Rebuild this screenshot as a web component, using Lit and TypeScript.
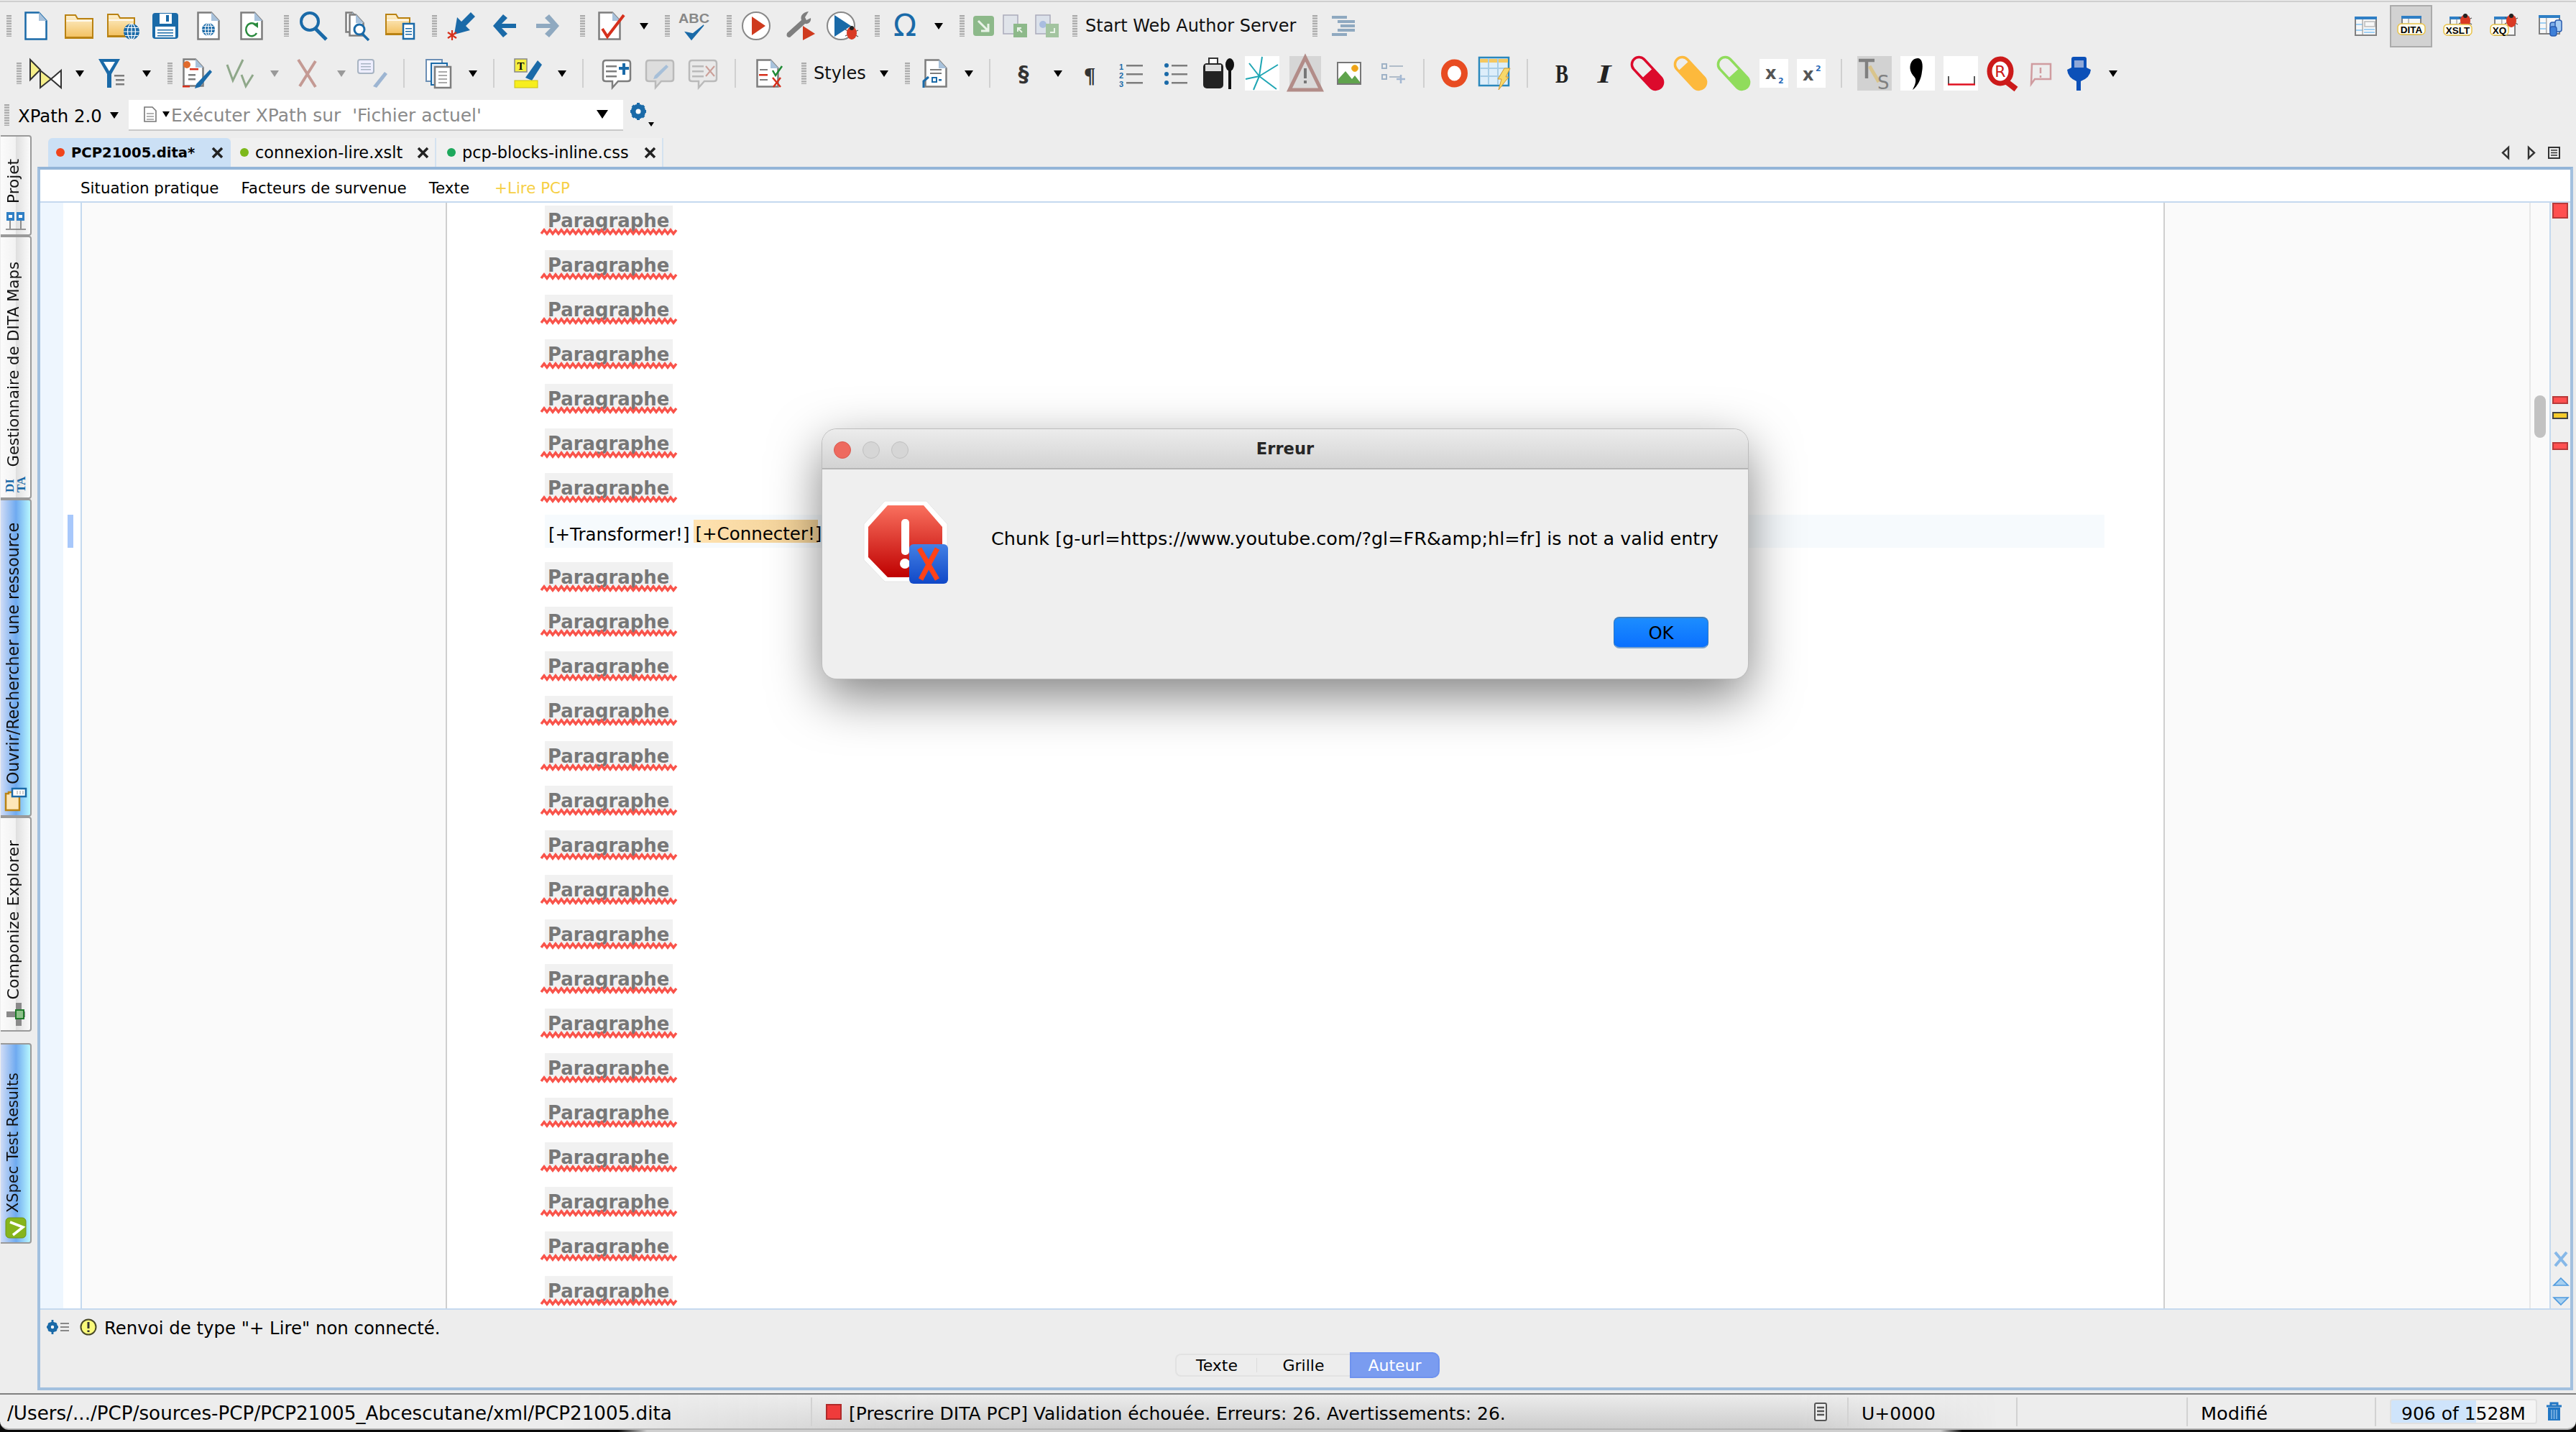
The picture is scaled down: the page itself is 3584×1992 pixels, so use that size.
import { LitElement, html, svg, css, TemplateResult } from "lit";
import { customElement } from "lit/decorators.js";

const B = "#1a6aa8";
const GY = "#7d7d7d";

// small drawing helpers, coordinates are screen pixels
const page = (w: number, h: number, c: string) => svg`
  <path d="M1.5 1.5H${w - 12}L${w - 1.5} 13V${h - 1.5}H1.5Z" fill="#fff" stroke=${c} stroke-width="2.5"/>
  <path d="M${w - 12} 1V13H${w - 1}Z" fill="#a8c2dc"/>`;
const folder = (w: number, h: number) => svg`
  <path d="M1 ${h - 1}V3H15L18 8H${w - 1}V${h - 1}Z" fill="url(#gold)" stroke="#b98213" stroke-width="2"/>
  <path d="M2 11H${w - 2}" stroke="#fff" stroke-width="1.5"/>
  <rect y=${h - 3} width=${w} height="3" fill="#b98213"/>`;
const globe = (x: number, y: number, r: number) => svg`
  <circle cx=${x} cy=${y} r=${r} fill=${B}/>
  <g stroke="#fff" stroke-width="1.2" fill="none">
    <path d="M${x - r} ${y}H${x + r}M${x} ${y - r}V${y + r}M${x - r + 2} ${y - r / 2}H${x + r - 2}M${x - r + 2} ${y + r / 2}H${x + r - 2}"/>
    <ellipse cx=${x} cy=${y} rx=${r / 2} ry=${r}/>
  </g>`;
const bubble = (c: string, w = 40) => svg`
  <path d="M5 2H${w - 5}Q${w - 1} 2 ${w - 1} 6V28Q${w - 1} 31 ${w - 5} 31H${w / 2 + 2}L${w / 2 - 6} 40V31H5Q1 31 1 28V6Q1 2 5 2Z" fill="#fff" stroke=${c} stroke-width="2.5"/>`;
const lines = (x: number, y: number, w: number, n: number, gap: number, c: string, sw = 2.5) => svg`
  ${Array.from({ length: n }, (_, i) => svg`<rect x=${x} y=${y + i * gap} width=${w} height=${sw} fill=${c}/>`)}`;
const pill = (c: string) => svg`
  <g transform="rotate(-43 24 20)">
    <rect x="14" y="-7" width="20" height="54" rx="10" fill="none" stroke=${c} stroke-width="3.5"/>
    <path d="M14 20H34V37A10 10 0 0 1 14 37Z" fill=${c}/>
  </g>`;
const bug = (x: number, y: number) => svg`
  <g stroke="#555" stroke-width="1.2"><path d="M${x - 9} ${y - 5}L${x + 9} ${y + 5}M${x - 9} ${y + 4}L${x + 9} ${y - 4}M${x} ${y - 10}V${y + 9}"/></g>
  <ellipse cx=${x} cy=${y} rx="7" ry="9" fill="#d93a24"/><circle cx=${x} cy=${y - 7} r="3" fill="#222"/>`;
const win = (w: number) => svg`
  <rect x="1" y="2" width=${w - 2} height="24" fill="#f7f7f7" stroke="#808080" stroke-width="2"/>
  <rect width=${w} height="4" fill="#2f7fc5"/>
  <rect x="2" y="10" width=${w / 3 - 1} height="2" fill="#9ed0f5"/><rect x="2" y="18" width=${w / 3 - 1} height="2" fill="#9ed0f5"/>
  <rect x=${w / 3} y="4" width="1.5" height="21" fill="#aaa"/>`;
const badge = (w: number, t: string) => svg`
  <rect x="1" y="11" width=${w - 2} height="15" rx="5" fill="#fffdf0" stroke="#e8c24a" stroke-width="1.5"/>
  <text x=${w / 2} y="24" text-anchor="middle" font-size="13.5" font-weight="700" fill="#000" font-family="Liberation Sans">${t}</text>`;

type Ic = { w: number; h: number; t: unknown };
const I = (w: number, h: number, t: unknown): Ic => ({ w, h, t });

const icons: Record<string, Ic> = {
  grip: I(7, 30, svg`<path d="M3.5 0V30" stroke="#aaa" stroke-width="7" stroke-dasharray="2.2 1.4"/>`),
  sep: I(2, 40, svg`<rect width="2" height="40" fill="#d0d0d0"/>`),
  caret: I(12, 9, svg`<path d="M0 0H12L6 9Z" fill="#000"/>`),
  caretg: I(12, 9, svg`<path d="M0 0H12L6 9Z" fill="#999"/>`),
  new: I(32, 40, page(32, 40, B)),
  folder: I(40, 36, folder(40, 36)),
  folderweb: I(45, 38, svg`${folder(39, 35)}${globe(34, 27, 11)}`),
  save: I(36, 36, svg`<rect width="36" height="36" rx="4" fill=${B}/><rect x="10" y="1" width="17" height="14" fill="#fff"/><rect x="19" y="3" width="4" height="9" fill=${B}/><rect x="4" y="19" width="28" height="15" fill="#fff"/>${lines(7, 23, 22, 3, 4, B, 1.5)}`),
  docweb: I(32, 40, svg`${page(32, 40, GY)}${globe(16, 25, 9)}`),
  docref: I(32, 40, svg`${page(32, 40, GY)}<path d="M22 19A8 9 0 1 0 23 30" fill="none" stroke="#2a8a3e" stroke-width="2.5"/><path d="M18 18L25 15V23Z" fill="#2a8a3e"/>`),
  search: I(41, 40, svg`<circle cx="15" cy="14" r="12" fill="none" stroke=${B} stroke-width="4"/><path d="M23 24L38 39" stroke=${B} stroke-width="5"/>`),
  docsearch: I(34, 40, svg`${page(22, 30, GY)}<g transform="translate(5 3)">${page(22, 32, GY)}</g><circle cx="20" cy="25" r="7" fill="#fff" stroke=${B} stroke-width="3"/><path d="M24 31L33 40" stroke=${B} stroke-width="3.5"/>`),
  folderdoc: I(41, 38, svg`${folder(35, 32)}<rect x="25" y="16" width="15" height="21" fill="#fff" stroke=${B} stroke-width="2.5"/>${lines(28, 22, 9, 3, 4, B, 1.5)}`),
  arrowstar: I(39, 40, svg`<path d="M10 32L14 8L20 14L33 1L39 7L26 20L32 26Z" fill=${B}/><path d="M7 26V40M1 29L13 37M13 29L1 37" stroke="#d6301c" stroke-width="2.2"/>`),
  back: I(32, 32, svg`<path d="M14 0L20 5L12 13H32V19H12L20 27L14 32L0 16Z" fill=${B}/>`),
  forward: I(32, 32, svg`<path d="M18 0L12 5L20 13H0V19H20L12 27L18 32L32 16Z" fill="#8fa9c0"/>`),
  checkdoc: I(38, 40, svg`${page(32, 40, GY)}<path d="M6 24L13 35L36 5" fill="none" stroke="#d6301c" stroke-width="4"/>`),
  abc: I(43, 40, svg`<text x="0" y="16" font-size="19" font-weight="700" fill="#888" font-family="Liberation Sans" textLength="43" lengthAdjust="spacingAndGlyphs">ABC</text><path d="M10 29L18 39L35 19L20 31Z" fill=${B} stroke=${B} stroke-width="1.5"/>`),
  play: I(40, 40, svg`<ellipse cx="20" cy="20" rx="19" ry="19" fill="#fff" stroke="#888" stroke-width="2"/><path d="M14 7L33 20L14 33Z" fill="#cf3a1e"/>`),
  wrench: I(41, 40, svg`<path d="M32 0C24 1 20 6 22 12L2 30Q0 36 6 36L27 17C32 18 36 14 35 9L29 12L27 8Z" fill="#7f7f7f"/><path d="M24 20L41 31L24 40Z" fill="#cf3a1e"/>`),
  debug: I(45, 40, svg`<ellipse cx="20" cy="20" rx="19" ry="19" fill="#fff" stroke="#888" stroke-width="2"/><path d="M11 5L34 20L11 35Z" fill=${B}/>${bug(35, 30)}`),
  omega: I(36, 36, svg`<text x="18" y="32" text-anchor="middle" font-size="42" fill=${B} font-family="DejaVu Sans">Ω</text>`),
  garrow: I(29, 28, svg`<rect width="29" height="28" rx="4" fill="#8db98a"/><path d="M7 7L21 21M21 11V21H11" stroke="#e9f3e8" stroke-width="3" fill="none"/>`),
  docg: I(34, 32, svg`<rect x="1" y="1" width="20" height="26" fill="#e0e4ea" stroke="#aab" stroke-width="1.5"/><rect x="15" y="13" width="19" height="19" fill="#8db98a"/><path d="M27 25L21 19M21 24V19H26" stroke="#e9f3e8" stroke-width="2" fill="none"/>`),
  docg2: I(33, 32, svg`<rect x="1" y="1" width="20" height="26" fill="#dbe1ea" stroke="#aab" stroke-width="1.5"/><circle cx="11" cy="14" r="5" fill="#a9bde0"/><rect x="15" y="13" width="18" height="19" fill="#a3c4a0"/><path d="M21 25H27V19" stroke="#e9f3e8" stroke-width="2" fill="none"/>`),
  indent: I(32, 28, svg`<g fill="#8fa9c0"><rect width="21" height="4"/><rect x="8" y="6" width="24" height="4"/><rect x="12" y="12" width="20" height="4"/><rect x="8" y="18" width="24" height="4"/><rect y="24" width="21" height="4"/></g>`),
  xpath: I(45, 40, svg`<path d="M1 1L15 15L1 29Z" fill="#f5ee8a" stroke="#333" stroke-width="2"/><path d="M15 40V16L30 28Z" fill="#f5ee8a" stroke="#333" stroke-width="2"/><path d="M44 40V16L30 28Z" fill="#fff" stroke="#333" stroke-width="2"/>`),
  filter: I(37, 40, svg`<path d="M0 0H30L18 21V40H12V21Z" fill=${B}/><path d="M7 4H23L15 17Z" fill="#fff"/>${lines(22, 22, 14, 1, 0, GY)}${lines(24, 28, 12, 2, 6, GY)}`),
  docedit: I(41, 42, svg`${page(30, 40, GY)}<circle cx="6" cy="9" r="5" fill="#e06a2c"/>${lines(10, 14, 12, 1, 0, "#d6301c")}${lines(8, 22, 10, 2, 6, GY)}<path d="M38 16L41 19L24 40L17 42L19 36Z" fill=${B}/>${lines(0, 38, 10, 1, 0, "#d6301c")}`),
  checks: I(40, 40, svg`<path d="M2 8L10 30L24 1M22 22L28 38L38 22" fill="none" stroke="#8fa88a" stroke-width="3"/>`),
  xm: I(32, 40, svg`<path d="M4 1L28 39M28 3L6 38" stroke="#c49a94" stroke-width="4"/>`),
  compen: I(42, 40, svg`<rect x="1" y="1" width="22" height="19" rx="3" fill="#eef" stroke="#a8b4c2" stroke-width="2"/>${lines(5, 6, 14, 3, 4, "#a8b4c2", 1.5)}<path d="M38 18L42 21L27 40L22 38Z" fill="#9db5d2"/>`),
  copy: I(36, 40, svg`<rect x="1" y="1" width="22" height="30" fill="#fff" stroke="#6c8fb5" stroke-width="2"/><rect x="8" y="6" width="22" height="30" fill="#e4eef8" stroke=${B} stroke-width="2"/><rect x="13" y="11" width="22" height="29" fill="#fff" stroke=${GY} stroke-width="2.5"/>${lines(18, 17, 12, 4, 5, "#aaa", 2)}`),
  hilite: I(38, 40, svg`<rect x="0" y="0" width="17" height="18" fill="#f5ee40" stroke="#888" stroke-width="1.5"/><text x="8.5" y="15" text-anchor="middle" font-size="15" font-weight="700" font-family="Liberation Serif">T</text><path d="M32 2L38 8L24 30L15 26Z" fill=${B}/><rect x="0" y="30" width="32" height="10" fill="#f7ee1e" stroke="#c9bf15"/>`),
  complus: I(40, 40, svg`${bubble("#7d7d7d")}${lines(5, 9, 15, 3, 7, GY)}<path d="M30 6V22M23 13H37" stroke=${B} stroke-width="4"/>`),
  compeng: I(40, 40, svg`<g opacity=".75"><path d="M5 2H35Q39 2 39 6V28Q39 31 35 31H22L14 40V31H5Q1 31 1 28V6Q1 2 5 2Z" fill="#d8d8d8" stroke="#aaa" stroke-width="2.5"/><path d="M29 8L32 11L16 27L11 28L13 23Z" fill="#8fb0d2"/></g>`),
  comx: I(40, 40, svg`<g opacity=".75"><path d="M5 2H35Q39 2 39 6V28Q39 31 35 31H22L14 40V31H5Q1 31 1 28V6Q1 2 5 2Z" fill="#e8e8e8" stroke="#aaa" stroke-width="2.5"/>${lines(5, 9, 16, 3, 7, "#aaa")}<path d="M24 10L36 24M36 10L24 24" stroke="#c0857c" stroke-width="2"/></g>`),
  docchk: I(37, 40, svg`${page(32, 40, GY)}${lines(5, 14, 11, 3, 7, GY, 2)}${lines(4, 21, 12, 1, 0, "#d6301c")}<path d="M23 16L27 23L36 10" fill="none" stroke="#1e8a34" stroke-width="2.5"/><path d="M23 26L34 39M34 26L24 39" stroke="#d6301c" stroke-width="2.5"/>`),
  docins: I(34, 40, svg`<g transform="translate(2 0)">${page(32, 40, GY)}</g>${lines(10, 14, 16, 2, 5, GY, 2)}<rect x="13" y="26" width="6" height="6" fill="none" stroke=${B} stroke-width="2"/><rect x="22" y="28" width="4" height="2.5" fill=${B}/><path d="M1 40V31L8 25" fill="none" stroke=${B} stroke-width="3"/>`),
  sect: I(16, 38, svg`<text x="8" y="30" text-anchor="middle" font-size="30" font-weight="700" fill="#333" font-family="DejaVu Sans">§</text>`),
  pilcrow: I(22, 36, svg`<text x="11" y="30" text-anchor="middle" font-size="30" font-weight="700" fill="#333" font-family="Liberation Serif">¶</text>`),
  ol: I(33, 30, svg`${["1", "2", "3"].map((n, i) => svg`<text x="0" y=${10 + i * 12} font-size="11" font-weight="700" fill=${B} font-family="Liberation Sans">${n}</text>`)}${lines(10, 3, 23, 3, 12, GY)}`),
  ul: I(32, 30, svg`<circle cx="3" cy="4" r="3" fill=${B}/><circle cx="3" cy="16" r="3" fill=${B}/><circle cx="3" cy="28" r="3" fill=${B}/>${lines(10, 3, 22, 3, 12, GY)}`),
  bottle: I(44, 44, svg`<rect x="9" y="1" width="12" height="8" fill="#fff" stroke="#333" stroke-width="2"/><rect x="1" y="8" width="28" height="35" rx="5" fill="#222"/><rect x="4" y="10" width="22" height="9" fill="#ddd"/><ellipse cx="38" cy="10" rx="6" ry="9" fill="#111"/><rect x="36" y="14" width="4" height="30" fill="#111"/>`),
  burst: I(48, 48, svg`<rect width="48" height="48" fill="#fff"/><g stroke="#1fa6b4" stroke-width="2" fill="none"><path d="M20 28L24 1M20 28L46 12M20 28L6 10M20 28L44 46M20 28L12 47M20 28L1 32"/></g>`),
  warn: I(46, 48, svg`<rect x="1" width="44" height="46" fill="#d6d6d6"/><path d="M23 2L45 47H1Z" fill="#dadada" stroke="#b28c88" stroke-width="5"/><rect x="21" y="17" width="4" height="14" fill="#777"/><rect x="21" y="34" width="4" height="4" fill="#777"/>`),
  image: I(34, 32, svg`<rect x="1" y="1" width="32" height="30" fill="#fff" stroke="#777" stroke-width="2"/><circle cx="25" cy="9" r="4.5" fill="#f0a018" stroke="#e8c030"/><path d="M2 30V24L12 13L21 24L25 19L32 28V30Z" fill="#5fa34c"/>`),
  listadd: I(33, 28, svg`<g fill="none" stroke="#9fb2c6" stroke-width="2"><rect x="1" y="1" width="6" height="6"/><rect x="1" y="16" width="6" height="6"/></g><path d="M11 4H30M11 19H26" stroke="#b0bcc8" stroke-width="2"/><path d="M27 16V28M21 22H33" stroke="#a4b8d2" stroke-width="2.5"/>`),
  buoy: I(37, 40, svg`<ellipse cx="18.5" cy="20" rx="14" ry="15" fill="#fff" stroke="#e84c22" stroke-width="9"/>`),
  tablebolt: I(45, 46, svg`<rect x="1" y="1" width="41" height="39" fill="#ddeefa" stroke="#2a88bd" stroke-width="2.5"/><rect x="2" y="3" width="39" height="5" fill="#f5c860"/><path d="M14 3V39M27 3V39M2 16H41M2 27H41" stroke="#a8cde6" stroke-width="2"/><path d="M36 16L44 16L38 28L42 28L28 46L32 31L27 31Z" fill="#f7d86a" stroke="#d69a2c"/>`),
  bold: I(18, 30, svg`<text x="9" y="28" text-anchor="middle" font-size="35" font-weight="700" fill="#222" font-family="Liberation Serif" textLength="18" lengthAdjust="spacingAndGlyphs">B</text>`),
  ital: I(19, 30, svg`<text x="9" y="28" text-anchor="middle" font-size="35" font-weight="700" font-style="italic" fill="#222" font-family="Liberation Serif" textLength="19" lengthAdjust="spacingAndGlyphs">I</text>`),
  pillr: I(48, 40, pill("#dc0a2c")),
  pillo: I(48, 40, svg`<g transform="rotate(-43 24 20)"><rect x="14" y="-7" width="20" height="54" rx="10" fill="none" stroke="#fdb93c" stroke-width="3.5"/><path d="M14 6H34V37A10 10 0 0 1 14 37Z" fill="#fdb93c"/></g>`),
  pillg: I(48, 40, pill("#90dc5c")),
  sub: I(40, 40, svg`<rect width="40" height="40" fill="#fff"/><text x="8" y="28" font-size="24" font-weight="700" fill="#555" font-family="DejaVu Sans">x</text><text x="26" y="34" font-size="11" font-weight="700" fill="#2a6ab8" font-family="DejaVu Sans">2</text>`),
  sup: I(40, 40, svg`<rect width="40" height="40" fill="#fff"/><text x="8" y="30" font-size="24" font-weight="700" fill="#555" font-family="DejaVu Sans">x</text><text x="26" y="17" font-size="11" font-weight="700" fill="#2a6ab8" font-family="DejaVu Sans">2</text>`),
  ts: I(48, 48, svg`<rect width="48" height="48" fill="#d2d2d2"/><path d="M2 6H24M13 6V31" stroke="#808080" stroke-width="4.5"/><path d="M17 14L30 36" stroke="#d9c48c" stroke-width="5"/><text x="28" y="46" font-size="26" fill="#808080" font-family="DejaVu Sans">S</text>`),
  comma: I(48, 48, svg`<rect width="48" height="48" fill="#fff"/><path d="M24 3C16 3 12 12 14 20C16 27 20 28 21 32C22 38 19 42 17 47C24 42 29 32 30 22C32 11 30 3 24 3Z" fill="#000"/>`),
  space: I(48, 48, svg`<rect width="48" height="48" fill="#fff"/><path d="M7 28V40M43 28V40" stroke="#222" stroke-width="1.5"/><path d="M6 39.5H44" stroke="#e01020" stroke-width="2.5"/>`),
  rmag: I(45, 46, svg`<ellipse cx="18" cy="20" rx="15" ry="17" fill="#fff" stroke="#cc1a1a" stroke-width="7"/><text x="18" y="28" text-anchor="middle" font-size="22" fill="#cc1a1a" font-family="DejaVu Sans">R</text><path d="M27 35L40 45" stroke="#cc1a1a" stroke-width="8"/>`),
  comex: I(31, 30, svg`<path d="M3 2H29V23H7L2 30Z" fill="#ededed" stroke="#d09ca0" stroke-width="2.5"/><path d="M15 7V15M15 18V21" stroke="#d09ca0" stroke-width="2.5"/>`),
  plug: I(33, 48, svg`<rect x="6" y="1" width="21" height="22" rx="3" fill="#0c50b8"/><rect x="10" y="6" width="13" height="15" fill="#8fa8d8"/><path d="M0 19Q1 30 13 35V48H19V35Q32 30 33 19L27 16H6Z" fill="#0c50b8"/>`),
  winplain: I(31, 27, svg`${win(31)}<rect x="14" y="7" width="14" height="7" fill="none" stroke="#bbb" stroke-width="1.5"/><rect x="13" y="17" width="15" height="2" fill="#9ed0f5"/><rect x="13" y="21" width="15" height="2" fill="#9ed0f5"/>`),
  windita: I(40, 28, svg`<g transform="translate(6 0)">${win(28)}</g>${badge(40, "DITA")}`),
  winxslt: I(41, 30, svg`<g transform="translate(9 2)">${win(28)}</g>${bug(31, 8)}<g transform="translate(0 2)">${badge(41, "XSLT")}</g>`),
  winxq: I(39, 30, svg`<g transform="translate(6 2)">${win(30)}</g>${bug(30, 8)}<g transform="translate(0 2)">${badge(27, "XQ")}</g>`),
  windb: I(33, 30, svg`${win(30)}<rect x="16" y="10" width="9" height="14" rx="3" fill="#7fb0ea" stroke="#2a5cb0" stroke-width="1.5"/><rect x="23" y="7" width="9" height="16" rx="3" fill="#a8cdf2" stroke="#2a5cb0" stroke-width="1.5"/><rect x="16" y="16" width="9" height="13" rx="3" fill="#3f80d8" stroke="#2a5cb0" stroke-width="1.5"/>`),
};

type Tool = [number, string] | [number, "text", string, number];

const row1: Tool[] = [
  [9, "grip"], [34, "new"], [90, "folder"], [149, "folderweb"], [212, "save"], [274, "docweb"], [334, "docref"],
  [395, "grip"], [416, "search"], [480, "docsearch"], [536, "folderdoc"], [601, "grip"], [622, "arrowstar"],
  [686, "back"], [746, "forward"], [807, "grip"], [832, "checkdoc"], [890, "caret"], [925, "grip"], [944, "abc"],
  [1011, "grip"], [1032, "play"], [1093, "wrench"], [1150, "debug"], [1217, "grip"], [1241, "omega"], [1300, "caret"],
  [1335, "grip"], [1354, "garrow"], [1395, "docg"], [1440, "docg2"], [1492, "grip"],
  [1510, "text", "Start Web Author Server", 300], [1826, "grip"], [1853, "indent"],
];
const row2: Tool[] = [
  [23, "grip"], [41, "xpath"], [105, "caret"], [137, "filter"], [198, "caret"], [233, "grip"], [254, "docedit"],
  [314, "checks"], [376, "caretg"], [411, "xm"], [469, "caretg"], [497, "compen"], [561, "sep"], [592, "copy"],
  [652, "caret"], [686, "sep"], [716, "hilite"], [776, "caret"], [810, "sep"], [838, "complus"], [898, "compeng"],
  [958, "comx"], [1022, "sep"], [1052, "docchk"], [1115, "grip"], [1132, "text", "Styles", 76], [1224, "caret"],
  [1259, "grip"], [1284, "docins"], [1342, "caret"], [1376, "sep"], [1416, "sect"], [1466, "caret"], [1505, "pilcrow"],
  [1557, "ol"], [1620, "ul"], [1673, "bottle"], [1732, "burst"], [1793, "warn"], [1860, "image"], [1922, "listadd"],
  [1980, "sep"], [2005, "buoy"], [2057, "tablebolt"], [2124, "sep"], [2164, "bold"], [2223, "ital"], [2268, "pillr"],
  [2328, "pillo"], [2388, "pillg"], [2448, "sub"], [2500, "sup"], [2561, "sep"], [2584, "ts"], [2644, "comma"],
  [2704, "space"], [2765, "rmag"], [2824, "comex"], [2876, "plug"], [2934, "caret"],
];

const markers = [
  { top: 0, h: 22, c: "mk" },
  { top: 269, h: 11, c: "mk" },
  { top: 291, h: 10, c: "mk warn" },
  { top: 333, h: 11, c: "mk" },
];

const squiggle = Array.from({ length: 48 }, (_, i) => `${i * 4},${i % 2 ? 2 : 7}`).join(" ");
const closeX = html`<svg class="x" width="17" height="15" viewBox="0 0 17 15"><path d="M2 1L15 14M15 1L2 14" stroke="#222" stroke-width="3.5"/></svg>`;

@customElement("app-root")
export class AppRoot extends LitElement {
  static styles = css`
    :host {
      display: block;
      box-sizing: border-box;
      width: 3584px;
      height: 1992px;
      padding-top: 1px;
      position: relative;
      overflow: hidden;
      background: #ededed;
      color: #000;
      font-family: "DejaVu Sans", sans-serif;
      font-size: 24.4px;
    }
    .defs {
      position: absolute;
      width: 0;
      height: 0;
    }
    svg {
      display: block;
      flex: none;
      overflow: visible;
    }
    .page-top {
      height: 2px;
      background: #cfcfcf;
    }
    .row {
      display: flex;
      align-items: center;
      height: 66px;
    }
    .ti {
      flex: none;
    }
    .tl {
      flex: none;
      font-size: 24px;
      white-space: nowrap;
      color: #111;
    }
    .selected {
      box-sizing: border-box;
      display: flex;
      align-items: center;
      justify-content: center;
      width: 59px;
      height: 59px;
      margin: 0 15px 0 18px;
      background: #d2d2d2;
      border: 2px solid #ababab;
    }
    .persp {
      margin-left: auto;
      margin-right: 19px;
      display: flex;
      align-items: center;
    }
    .xrow {
      display: flex;
      align-items: center;
      height: 50px;
      padding-left: 6px;
    }
    .xpath-label {
      margin-left: 12px;
      width: 118px;
      padding-top: 2px;
      white-space: nowrap;
    }
    .combo {
      box-sizing: border-box;
      width: 688px;
      height: 43px;
      margin-left: 14px;
      padding-left: 21px;
      display: flex;
      align-items: center;
      background: #fff;
      border-bottom: 2px solid #c9c9c9;
      color: #8a8a8a;
      white-space: pre;
      font-size: 24.9px;
    }
    .combo-text {
      flex: 1;
      padding-top: 2px;
    }
    .body {
      display: flex;
      height: 1753px;
    }
    .rail {
      flex: none;
      width: 52px;
      padding-top: 3px;
      box-sizing: border-box;
    }
    .vtab {
      box-sizing: border-box;
      width: 43px;
      margin-left: 1px;
      display: flex;
      flex-direction: column;
      align-items: center;
      justify-content: flex-end;
      gap: 9px;
      padding-bottom: 6px;
      font-size: 21.6px;
      color: #111;
      border: 2px solid #9a9a9a;
      border-left: none;
      border-top-right-radius: 4px;
      border-bottom-right-radius: 4px;
      background: linear-gradient(90deg, #fbfbfb 0, #f2f2f2 50%, #dfdfdf 52%, #fbfbfb 100%);
      overflow: hidden;
    }
    .vtab.on {
      background: linear-gradient(90deg, #d0dcf6 0, #6faaf0 52%, #b7f6ff 100%);
    }
    .vtab span {
      writing-mode: vertical-rl;
      transform: rotate(180deg);
      white-space: nowrap;
      margin-right: 7px;
    }
    .t-proj {
      height: 140px;
      gap: 11px;
    }
    .t-dita {
      height: 366px;
      font-size: 21.2px;
      gap: 7px;
    }
    .t-open {
      height: 442px;
      font-size: 22.1px;
      gap: 5px;
    }
    .t-comp {
      height: 299px;
      font-size: 22px;
      gap: 5px;
    }
    .t-spec {
      height: 279px;
      margin-top: 16px;
      font-size: 20.9px;
      gap: 7px;
    }
    .main {
      flex: none;
      width: 3528px;
      display: flex;
      flex-direction: column;
    }
    .strip {
      flex: none;
      height: 47px;
      box-sizing: border-box;
      padding: 7px 0 0 15px;
      display: flex;
      align-items: stretch;
    }
    .tab {
      box-sizing: border-box;
      display: flex;
      align-items: center;
      font-size: 22.4px;
      white-space: nowrap;
      border-right: 2px solid #d4e2f0;
      background: #f0f0f0;
    }
    .tab.on {
      font-weight: 700;
      font-size: 19.6px;
      background: #cbe0f5;
      border: none;
      border-radius: 6px 6px 0 0;
    }
    .dot {
      width: 12px;
      height: 12px;
      border-radius: 50%;
      margin-right: 9px;
      flex: none;
    }
    .tab b {
      flex: 1;
      font-weight: inherit;
    }
    .nav {
      margin-left: auto;
      display: flex;
      align-items: center;
      padding-right: 18px;
      gap: 26px;
    }
    .frame {
      flex: none;
      height: 1702px;
      box-sizing: border-box;
      display: flex;
      flex-direction: column;
      border: 4px solid #a2c0df;
      border-top-color: #94b5d8;
      background: #fff;
    }
    .crumbs {
      flex: none;
      height: 46px;
      box-sizing: border-box;
      border-bottom: 2px solid #c5d9ef;
      display: flex;
      align-items: center;
      font-size: 21.4px;
      padding: 6px 0 0 56px;
      gap: 31px;
      white-space: nowrap;
    }
    .crumbs .lire {
      color: #f6cf45;
      margin-left: 4px;
    }
    .editor {
      flex: none;
      height: 1538px;
      display: flex;
      overflow: hidden;
      border-bottom: 2px solid #c5d9ef;
    }
    .gutter {
      flex: none;
      width: 32px;
      background: #eef6fe;
    }
    .lines {
      flex: none;
      width: 24px;
      box-sizing: content-box;
      background: #fff;
      border-right: 2px solid #c5d9ef;
      position: relative;
    }
    .cursor {
      position: absolute;
      left: 6px;
      top: 434px;
      width: 8px;
      height: 46px;
      background: #a8c8fb;
    }
    .margin-l {
      flex: none;
      width: 506px;
      background: #fafafa;
      border-right: 2px solid #cfcfcf;
    }
    .content {
      flex: none;
      width: 2388px;
      box-sizing: border-box;
      padding: 4px 0 0 136px;
      display: flex;
      flex-direction: column;
      background: #fff;
    }
    .para {
      flex: none;
      position: relative;
      width: 178px;
      height: 34px;
      margin-bottom: 28.06px;
      padding-left: 4px;
      box-sizing: border-box;
      background: #f1f1f1;
      color: #777;
      font-weight: 700;
      font-size: 25.9px;
      line-height: 42px;
      white-space: nowrap;
    }
    .para svg {
      position: absolute;
      left: -5px;
      top: 32px;
    }
    .active {
      flex: none;
      width: 2170px;
      height: 46px;
      margin: -4px 0 20px;
      padding: 8px 0 0 5px;
      box-sizing: border-box;
      display: flex;
      align-items: center;
      background: #f6fafd;
      font-size: 24.5px;
      white-space: nowrap;
    }
    .connect {
      margin: 0 0 8px 6px;
      width: 173px;
      height: 32px;
      line-height: 40px;
      box-sizing: border-box;
      padding: 0 2px;
      background: linear-gradient(90deg, #ffe2b0, #f0cf95);
    }
    .margin-r {
      flex: none;
      width: 507px;
      background: #fafafa;
      border-left: 2px solid #cfcfcf;
      border-right: 2px solid #e8e8e8;
    }
    .track {
      flex: none;
      width: 26px;
      background: #fafafa;
      position: relative;
    }
    .thumb {
      position: absolute;
      left: 5px;
      top: 268px;
      width: 16px;
      height: 59px;
      border-radius: 8px;
      background: #c2c2c2;
    }
    .ruler {
      flex: none;
      flex-grow: 1;
      position: relative;
      background: #efefef;
      border-left: 2px solid #c5d9ef;
      display: flex;
      flex-direction: column;
      justify-content: flex-end;
      align-items: center;
      padding-bottom: 4px;
      box-sizing: border-box;
    }
    .mk {
      position: absolute;
      left: 2px;
      width: 22px;
      box-sizing: border-box;
      background: #ff5050;
      border: 2px solid #b83a3a;
    }
    .mk.warn {
      background: #f6cb2c;
      border-color: #444;
    }
    .ruler-btns {
      display: flex;
      flex-direction: column;
      align-items: center;
      gap: 15px;
    }
    .panel {
      flex: 1;
      background: #ededed;
      padding: 12px 0 0 9px;
      position: relative;
    }
    .msg {
      display: flex;
      align-items: center;
      height: 24px;
      white-space: nowrap;
      line-height: 24px;
    }
    .msg-text {
      margin-left: 10px;
      padding-top: 4px;
    }
    .modes {
      display: flex;
      margin: 23px 0 0 1570px;
      font-size: 22px;
      height: 36px;
      align-items: center;
    }
    .seg {
      box-sizing: border-box;
      height: 32px;
      display: flex;
      align-items: center;
      justify-content: center;
      border: 2px solid #e2e2e2;
      border-left: none;
      border-right: none;
    }
    .seg.first {
      width: 114px;
      border-left: 2px solid #e2e2e2;
      border-radius: 8px 0 0 8px;
      position: relative;
    }
    .seg.first::after {
      content: "";
      position: absolute;
      right: 0;
      top: 4px;
      bottom: 4px;
      width: 1px;
      background: #dcdcdc;
    }
    .seg.mid {
      width: 129px;
    }
    .seg.sel {
      width: 125px;
      height: 36px;
      color: #fff;
      background: #7a9cf0;
      border: 2px solid #6e92ee;
      border-radius: 0 10px 10px 0;
    }
    .statusbar {
      position: absolute;
      left: 0;
      right: 0;
      top: 1938px;
      height: 51px;
      box-sizing: border-box;
      display: flex;
      align-items: center;
      white-space: nowrap;
      font-size: 25px;
      background: #ededed;
      border-top: 2px solid #808080;
      border-bottom: 2px solid #b5b5b5;
      border-radius: 0 0 12px 12px;
    }
    .statusbar::before {
      content: "";
      position: absolute;
      inset: 0;
      background: linear-gradient(#ececec, #cdcdcd);
      -webkit-mask-image: linear-gradient(90deg, transparent 780px, #000 1300px, #000 2500px, transparent 2780px);
      mask-image: linear-gradient(90deg, transparent 780px, #000 1300px, #000 2500px, transparent 2780px);
    }
    .under {
      position: absolute;
      left: 0;
      right: 0;
      top: 1978px;
      height: 14px;
      background: linear-gradient(90deg, #0a0a0a 860px, #cfcfcf 900px, #cfcfcf 2700px, #0a0a0a 2730px);
    }
    .cell {
      position: relative;
      box-sizing: border-box;
      flex: none;
      height: 40px;
      display: flex;
      align-items: center;
      border-left: 2px solid #d2d2d2;
    }
    .st {
      padding-top: 5px;
    }
    .cell.c0 {
      width: 1128px;
      padding-left: 10px;
      border-left: none;
      font-size: 26.2px;
    }
    .c1 {
      width: 1442px;
      padding-left: 19px;
    }
    .sq {
      width: 22px;
      height: 22px;
      box-sizing: border-box;
      background: #ef3b3b;
      border: 2px solid #b02a2a;
      margin-right: 10px;
    }
    .spacer {
      margin-left: auto;
      margin-right: 28px;
    }
    .c2 {
      width: 235px;
      padding-left: 18px;
    }
    .c3 {
      width: 237px;
    }
    .c4 {
      width: 262px;
      padding-left: 18px;
      font-size: 25.6px;
    }
    .c5 {
      border-left: 2px solid #d2d2d2;
      padding-left: 19px;
      gap: 12px;
    }
    .mem {
      box-sizing: border-box;
      position: relative;
      width: 205px;
      height: 35px;
      border: 2px solid #e0e0e0;
      border-radius: 4px;
      padding-left: 14px;
      display: flex;
      align-items: center;
      background: linear-gradient(90deg, #cfe4fb 118px, #f4f4f4 118px);
    }
    .dialog {
      position: absolute;
      left: 1144px;
      top: 597px;
      width: 1288px;
      height: 347px;
      box-sizing: border-box;
      background: #efefef;
      border-radius: 20px;
      box-shadow: 0 0 0 1px #bdbdbd, 0 24px 70px rgba(0, 0, 0, 0.5);
      display: flex;
      flex-direction: column;
    }
    .d-title {
      flex: none;
      height: 56px;
      box-sizing: border-box;
      position: relative;
      display: flex;
      align-items: center;
      justify-content: center;
      background: linear-gradient(#ececec, #d3d3d3);
      border-bottom: 2px solid #b5b5b5;
      border-radius: 20px 20px 0 0;
      font-weight: 700;
      font-size: 22.6px;
      color: #262626;
    }
    .lights {
      position: absolute;
      left: 16px;
      top: 17px;
      display: flex;
      gap: 16px;
    }
    .lights i {
      width: 24px;
      height: 24px;
      box-sizing: border-box;
      border-radius: 50%;
      background: #d6d6d6;
      border: 1px solid #c0c0c0;
    }
    .lights i.close {
      background: #ee6a5f;
      border-color: #d9584e;
    }
    .d-body {
      flex: 1;
      padding: 44px 55px 0 57px;
      display: flex;
      flex-direction: column;
    }
    .d-row {
      display: flex;
      align-items: flex-start;
      height: 115px;
    }
    .d-msg {
      margin: 34px 0 0 60px;
      line-height: 36px;
      font-size: 25.5px;
      white-space: nowrap;
    }
    .ok {
      margin: 46px 0 0 auto;
      box-sizing: border-box;
      width: 132px;
      height: 44px;
      display: flex;
      align-items: center;
      justify-content: center;
      border-radius: 8px;
      background: linear-gradient(#1c8dff, #0a70ff);
      border: 1px solid #2d76c2;
      border-top: 2px solid #3f7fbe;
      border-bottom: 2px solid #7aa3cf;
    }
  `;

  private renderTools(list: Tool[]) {
    let cur = 0;
    return list.map((t) => {
      const gap = t[0] - cur;
      if (t[1] === "text") {
        const w = t[3] as number;
        cur = t[0] + w;
        return html`<span class="tl" style="margin-left:${gap}px;width:${w}px">${t[2]}</span>`;
      }
      const ic = icons[t[1]];
      cur = t[0] + ic.w;
      return html`<span class="ti" style="margin-left:${gap}px">${this.icon(t[1])}</span>`;
    });
  }

  private icon(name: string): TemplateResult {
    const ic = icons[name];
    return html`<svg width=${ic.w} height=${ic.h} viewBox="0 0 ${ic.w} ${ic.h}">${ic.t}</svg>`;
  }

  private renderRows() {
    const rows = [];
    for (let i = 0; i < 25; i++) {
      if (i === 7) {
        rows.push(html`<div class="active">[+Transformer!]<span class="connect">[+Connecter!]</span></div>`);
      } else {
        rows.push(html`<div class="para">Paragraphe
          <svg width="192" height="10" viewBox="0 0 192 10"><polyline points=${squiggle} fill="none" stroke="#f9534a" stroke-width="3.6"/></svg>
        </div>`);
      }
    }
    return rows;
  }

  render() {
    return html`
      <svg class="defs">
        <defs>
          <linearGradient id="gold" x1="0" y1="0" x2="0" y2="1">
            <stop offset="0" stop-color="#fdf0cf" />
            <stop offset="1" stop-color="#f3bf5c" />
          </linearGradient>
          <linearGradient id="stop" x1="0" y1="0" x2="0" y2="1">
            <stop offset="0" stop-color="#f9705e" />
            <stop offset="1" stop-color="#bf0000" />
          </linearGradient>
          <linearGradient id="xblue" x1="0" y1="0" x2="0" y2="1">
            <stop offset="0" stop-color="#4380e4" />
            <stop offset="1" stop-color="#1048c8" />
          </linearGradient>
        </defs>
      </svg>
      <div class="page-top"></div>
      <div class="row">
        ${this.renderTools(row1)}
        <div class="persp">
          ${this.icon("winplain")}
          <div class="selected">${this.icon("windita")}</div>
          ${this.icon("winxslt")}
          <span style="width:24px"></span>
          ${this.icon("winxq")}
          <span style="width:29px"></span>
          ${this.icon("windb")}
        </div>
      </div>
      <div class="row">${this.renderTools(row2)}</div>
      <div class="xrow">
        <span class="ti">${this.icon("grip")}</span>
        <span class="xpath-label">XPath 2.0</span>
        <svg style="margin-left:10px" width="12" height="9" viewBox="0 0 12 9"><path d="M0 0H12L6 9Z" fill="#000"/></svg>
        <div class="combo">
          <svg width="18" height="22" viewBox="0 0 18 22"><path d="M1 1H12L17 6V21H1Z" fill="#fff" stroke="#777" stroke-width="1.6"/><path d="M4 10H14M4 14H14M4 18H14" stroke="#999" stroke-width="1.4"/></svg>
          <svg style="margin:0 2px 0 8px" width="10" height="8" viewBox="0 0 10 8"><path d="M0 0H10L5 8Z" fill="#000"/></svg>
          <span class="combo-text">Exécuter XPath sur  'Fichier actuel'</span>
          <svg style="margin-right:21px" width="16" height="12" viewBox="0 0 16 12"><path d="M0 0H16L8 12Z" fill="#000"/></svg>
        </div>
        <svg style="margin-left:11px" width="32" height="36" viewBox="0 0 32 36">
          <circle cx="10" cy="13" r="7.5" fill="none" stroke=${B} stroke-width="5.5" />
          <path d="M10 1V25M-1 13H21M2 5L18 21M18 5L2 21" stroke=${B} stroke-width="4" />
          <circle cx="10" cy="13" r="3.5" fill="#fff" />
          <path d="M24 28H32L28 34Z" fill="#000" />
        </svg>
      </div>
      <div class="body">
        <div class="rail">
          <div class="vtab t-proj">
            <span>Projet</span>
            <svg width="28" height="26" viewBox="0 0 28 26"><g fill="#2f7fc5"><rect x="1" y="1" width="11" height="12"/><rect x="15" y="1" width="11" height="12"/></g><g fill="#fff"><rect x="4" y="5" width="5" height="4"/><rect x="18" y="5" width="5" height="4"/></g><path d="M6 13V24M21 13V24M0 25H28" stroke="#777" stroke-width="1.6"/></svg>
          </div>
          <div class="vtab t-dita">
            <span>Gestionnaire de DITA Maps</span>
            <svg width="32" height="30" viewBox="0 0 32 30"><g transform="rotate(-90 15 15)" font-family="Liberation Serif" font-weight="700" font-size="17" fill="${B}"><text x="1" y="13">DI</text><text x="1" y="29">TA</text></g></svg>
          </div>
          <div class="vtab on t-open">
            <span>Ouvrir/Rechercher une ressource</span>
            <svg width="30" height="32" viewBox="0 0 30 32"><path d="M1 31V8H5V6H20V31Z" fill="#fde6b8" stroke="#b98213" stroke-width="2.5"/><rect x="10" y="1" width="19" height="11" fill="#fff" stroke=${B} stroke-width="2.5"/><path d="M17 4V9M21 4V9M25 4V9" stroke="#999"/></svg>
          </div>
          <div class="vtab t-comp">
            <span>Componize Explorer</span>
            <svg width="26" height="32" viewBox="0 0 26 32"><path d="M0 16H26M17 0V32" stroke="#8a8a8a" stroke-width="8"/><rect x="13" y="10" width="11" height="12" fill="#8ec28a" stroke="#1f7a2a" stroke-width="2"/></svg>
          </div>
          <div class="vtab on t-spec">
            <span>XSpec Test Results</span>
            <svg width="28" height="28" viewBox="0 0 28 28"><rect width="28" height="28" rx="5" fill="#86b51c" stroke="#6f9416"/><path d="M6 6L24 13L10 24" fill="none" stroke="#fff" stroke-width="3.5"/></svg>
          </div>
        </div>
        <div class="main">
          <div class="strip">
            <div class="tab on" style="width:254px;padding:0 10px 0 11px">
              <i class="dot" style="background:#f0441c"></i><b>PCP21005.dita*</b>${closeX}
            </div>
            <div class="tab" style="width:286px;padding:0 8px 0 13px">
              <i class="dot" style="background:#7db81a"></i><b>connexion-lire.xslt</b>${closeX}
            </div>
            <div class="tab" style="width:316px;padding:0 8px 0 15px">
              <i class="dot" style="background:#1da85c"></i><b>pcp-blocks-inline.css</b>${closeX}
            </div>
            <div class="nav">
              <svg width="11" height="19" viewBox="0 0 11 19"><path d="M10 2V17L2 9.5Z" fill="none" stroke="#333" stroke-width="2.4"/></svg>
              <svg width="11" height="19" viewBox="0 0 11 19"><path d="M1 2V17L9 9.5Z" fill="none" stroke="#333" stroke-width="2.4"/></svg>
              <svg style="margin-left:-9px" width="17" height="17" viewBox="0 0 17 17"><rect x="1" y="1" width="15" height="15" fill="none" stroke="#333" stroke-width="2"/><path d="M4 5H13M4 8.500H13M4 12H13" stroke="#333" stroke-width="1.6"/></svg>
            </div>
          </div>
          <div class="frame">
            <div class="crumbs">
              <span>Situation pratique</span><span>Facteurs de survenue</span><span>Texte</span><span class="lire">+Lire PCP</span>
            </div>
            <div class="editor">
              <div class="gutter"></div>
              <div class="lines"><div class="cursor"></div></div>
              <div class="margin-l"></div>
              <div class="content">${this.renderRows()}</div>
              <div class="margin-r"></div>
              <div class="track"><div class="thumb"></div></div>
              <div class="ruler">
                ${markers.map((m) => html`<div class=${m.c} style="top:${m.top}px;height:${m.h}px"></div>`)}
                <div class="ruler-btns">
                  <svg width="22" height="21" viewBox="0 0 22 21"><path d="M3 1L19 20M19 1L3 20" stroke="#86b8e8" stroke-width="4"/></svg>
                  <svg width="22" height="12" viewBox="0 0 22 12"><path d="M11 1L21 11H1Z" fill="#a8d0f0" stroke="#4f9ade" stroke-width="1.6"/></svg>
                  <svg width="22" height="12" viewBox="0 0 22 12"><path d="M11 11L21 1H1Z" fill="#a8d0f0" stroke="#4f9ade" stroke-width="1.6"/></svg>
                </div>
              </div>
            </div>
            <div class="panel">
              <div class="msg">
                <svg width="32" height="20" viewBox="0 0 32 20"><circle cx="8" cy="10" r="5" fill="none" stroke=${B} stroke-width="4.5"/><path d="M8 0V20M0 10H16M2.500 4.500L13.500 15.500M13.500 4.500L2.500 15.500" stroke=${B} stroke-width="2.8"/><circle cx="8" cy="10" r="2.2" fill="#fff"/><path d="M19 5H31M19 10H31M19 15H31" stroke="#888" stroke-width="2"/></svg>
                <svg style="margin-left:14px" width="24" height="24" viewBox="0 0 24 24"><circle cx="12" cy="12" r="10.500" fill="#fafa7a" stroke="#4a4a28" stroke-width="2"/><path d="M12 5V14M12 16.500V19" stroke="#333" stroke-width="3"/></svg>
                <span class="msg-text">Renvoi de type "+ Lire" non connecté.</span>
              </div>
              <div class="modes">
                <div class="seg first">Texte</div>
                <div class="seg mid">Grille</div>
                <div class="seg sel">Auteur</div>
              </div>
            </div>
          </div>
        </div>
      </div>
      <div class="under"></div>
      <div class="statusbar">
        <div class="cell c0"><span class="st">/Users/.../PCP/sources-PCP/PCP21005_Abcescutane/xml/PCP21005.dita</span></div>
        <div class="cell c1">
          <i class="sq"></i>
          <span class="st">[Prescrire DITA PCP] Validation échouée. Erreurs: 26. Avertissements: 26.</span>
          <svg class="spacer" width="18" height="26" viewBox="0 0 18 26"><rect x="1" y="1" width="16" height="24" rx="2" fill="#eee" stroke="#555" stroke-width="2"/><path d="M4 7H14M4 12H14M4 17H14" stroke="#555" stroke-width="2.4"/></svg>
        </div>
        <div class="cell c2"><span class="st">U+0000</span></div>
        <div class="cell c3"></div>
        <div class="cell c4"><span class="st">Modifié</span></div>
        <div class="cell c5">
          <div class="mem"><span class="st">906 of 1528M</span></div>
          <svg width="23" height="26" viewBox="0 0 23 26"><path d="M1 5H22M7 4V1H16V4" stroke="#2277c4" stroke-width="3" fill="none"/><path d="M3 7H20V25H3Z" fill="#2277c4"/><path d="M8 10V23M11.500 10V23M15 10V23" stroke="#8fc0ea" stroke-width="1.4"/></svg>
        </div>
      </div>
      <div class="dialog">
        <div class="d-title">
          <div class="lights"><i class="close"></i><i></i><i></i></div>
          Erreur
        </div>
        <div class="d-body">
          <div class="d-row">
            <svg width="118" height="115" viewBox="0 0 118 115">
              <path d="M30 0H88L117 32V82L90 112H30L1 82V32Z" fill="#fff" stroke="#e6e6e6" />
              <path d="M34 6H84L110 36V78L84 106H34L7 78V36Z" fill="url(#stop)" />
              <rect x="53" y="25" width="11" height="50" rx="5" fill="#fff" />
              <circle cx="58" cy="87" r="7" fill="#fff" />
              <rect x="64" y="60" width="54" height="55" rx="6" fill="url(#xblue)" />
              <path d="M78 66L103 109M103 66L80 109" stroke="#ff4218" stroke-width="7" />
            </svg>
            <span class="d-msg">Chunk [g-url=https://www.youtube.com/?gl=FR&amp;amp;hl=fr] is not a valid entry</span>
          </div>
          <div class="ok">OK</div>
        </div>
      </div>
    `;
  }
}
